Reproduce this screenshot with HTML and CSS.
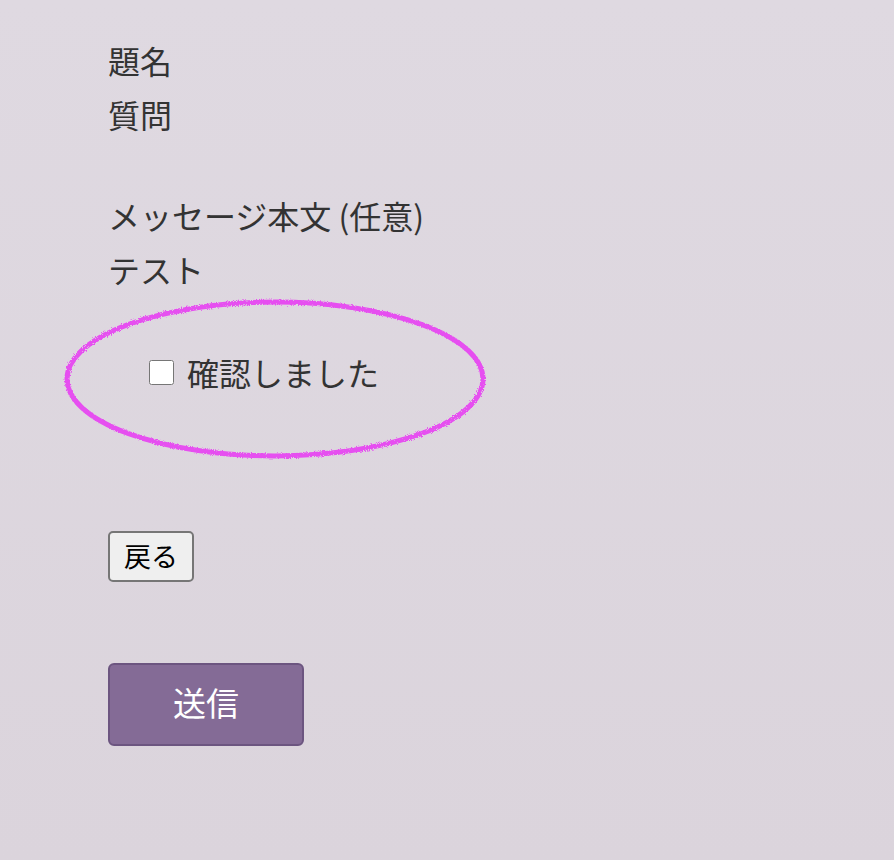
FILE: index.html
```html
<!DOCTYPE html>
<html lang="ja">
<head>
    <meta charset="UTF-8">
    <meta name="viewport" content="width=device-width, initial-scale=1.0">
    <title>確認画面</title>
    <link rel="stylesheet" href="styles.css">
</head>
<body>
    <main class="confirm">
        <dl class="fields">
            <div class="field">
                <dt>題名</dt>
                <dd>質問</dd>
            </div>
            <div class="field">
                <dt>メッセージ本文 (任意)</dt>
                <dd>テスト</dd>
            </div>
        </dl>

        <div class="check-area">
            <label class="check">
                <input type="checkbox">
                <span>確認しました</span>
            </label>
            <!-- 手書き風の丸 -->
            <svg class="circle-mark" width="430" height="170" viewBox="0 0 430 170">
                <defs>
                    <filter id="pencil">
                        <feTurbulence type="fractalNoise" baseFrequency="1.2" numOctaves="2" result="noise"/>
                        <feDisplacementMap in="SourceGraphic" in2="noise" scale="4"/>
                    </filter>
                </defs>
                <ellipse cx="215" cy="81" rx="208" ry="77" fill="none" stroke="#e650f0" stroke-width="5" filter="url(#pencil)"/>
            </svg>
        </div>

        <div class="back-row">
            <button type="button" class="back-btn">戻る</button>
        </div>

        <div class="submit-row">
            <button type="submit" class="submit-btn">送信</button>
        </div>
    </main>
</body>
</html>
```

FILE: styles.css
```css
html {
    min-height: 100%;
    background: linear-gradient(180deg, #dfd9e1, #dbd4dc);
}

body {
    margin: 0;
    padding: 0;
    font-family: "Noto Sans CJK JP", "Noto Sans", sans-serif;
    color: #333;
}

.confirm {
    padding: 33px 0 0 108px;
}

.fields {
    margin: 0;
    display: flex;
    flex-direction: column;
    gap: 47px;
}

.field dt,
.field dd {
    margin: 0;
    font-size: 32px;
    line-height: 54px;
}

.check-area {
    position: relative;
    height: 168px;
    margin-top: 4px;
}

.check {
    display: flex;
    align-items: center;
    gap: 13px;
    padding: 50px 0 0 41px;
    font-size: 32px;
    line-height: 44px;
}

.check input {
    width: 25px;
    height: 25px;
    margin: 0;
    accent-color: #846b96;
}

.circle-mark {
    position: absolute;
    left: -48px;
    top: -2px;
    pointer-events: none;
}

.back-row {
    margin-top: 63px;
}

.back-btn {
    font-family: "Noto Sans CJK JP", sans-serif;
    font-size: 27px;
    line-height: 35px;
    padding: 5px 14px 7px;
    color: #000;
    background-color: #efefef;
    border: 2px solid #767676;
    border-radius: 5px;
}

.submit-row {
    margin-top: 81px;
}

.submit-btn {
    width: 196px;
    height: 83px;
    padding: 0 0 6px;
    font-family: "Noto Sans CJK JP", sans-serif;
    font-size: 33px;
    color: #fff;
    background-color: #846b96;
    border: 2px solid #6c5580;
    border-radius: 6px;
}
```
